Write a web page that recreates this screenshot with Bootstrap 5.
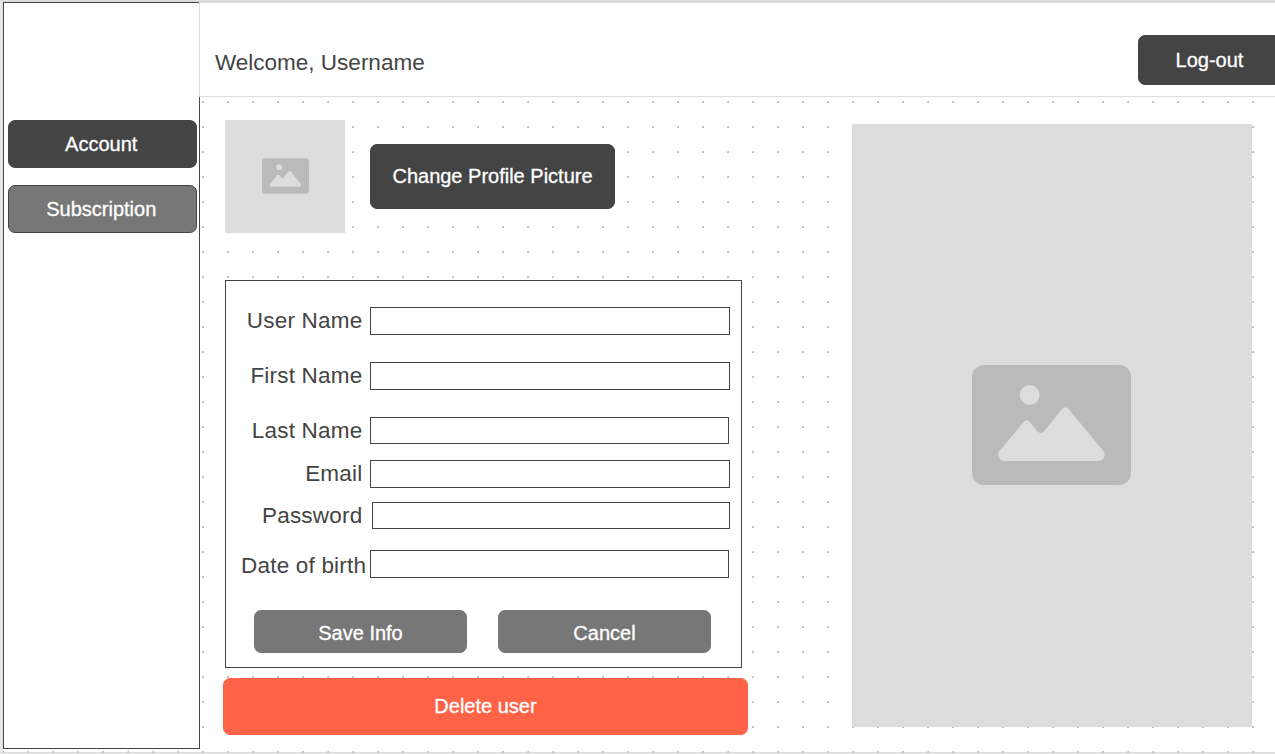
<!DOCTYPE html>
<html lang="en">
<head>
<meta charset="utf-8">
<meta name="viewport" content="width=device-width, initial-scale=1">
<title>Account</title>
<link href="https://cdn.jsdelivr.net/npm/bootstrap@5.3.0/dist/css/bootstrap.min.css" rel="stylesheet">
<style>
:root { --ink: #444; --mid: #777; --pale: #ddd; }
body { font-family: "Liberation Sans", Arial, sans-serif; color: var(--ink); background: #e8e8e8; height: 754px; font-size: 22.5px; line-height: 28px; }
.frame { height: 753px; border-top: 2px solid var(--pale); padding-left: 3px; background: linear-gradient(90deg, #ececec, #dedede 3px); }
.dotted { height: 751px; background: url("data:image/svg+xml,%3Csvg xmlns='http://www.w3.org/2000/svg' width='25' height='25' shape-rendering='crispEdges'%3E%3Crect width='2' height='2' fill='%23bbb'/%3E%3Crect width='1' height='1' fill='%23d8d8d8'/%3E%3C/svg%3E") 24px 24px, linear-gradient(var(--pale), var(--pale)) 0 100% / 100% 1px no-repeat, #fff; }
.side { width: 197px; height: 747px; border: 1px solid var(--ink); padding: 117px 2px 0 4px; gap: 17px; }
.content-col { margin-left: -1px; }
.topbar { height: 95px; border: 1px solid var(--pale); border-right: 0; padding-left: 15px; position: relative; }
.welcome { margin-top: 46px; }
.btn { --bs-btn-font-size: 20px; --bs-btn-line-height: 24px; --bs-btn-padding-x: 0; --bs-btn-padding-y: 0; --bs-btn-border-radius: 7px; --bs-btn-color: #fff; --bs-btn-hover-color: #fff; -webkit-text-stroke: .3px #fff; }
.btn-ink { --bs-btn-bg: var(--ink); --bs-btn-border-color: var(--ink); --bs-btn-hover-bg: #333; }
.btn-mid { --bs-btn-bg: var(--mid); --bs-btn-border-color: var(--mid); --bs-btn-hover-bg: #666; }
.btn-tomato { --bs-btn-bg: #ff6347; --bs-btn-border-color: #ff6347; --bs-btn-hover-bg: #e5533a; width: 525px; height: 57px; margin: 10px 0 0 -2px; padding-bottom: 2px; }
.side .btn { height: 48px; padding-right: 2.5px; }
.side .btn-mid { --bs-btn-border-color: var(--ink); }
.logout { width: 143px; height: 50px; margin: 32px -6px 0 0; }
.panels { padding: 23px 23px 0 26px; }
.left-col { width: 517px; }
.avatar { width: 120px; height: 113px; padding-bottom: 2px; }
.hero { width: 400px; height: 603px; margin-top: 4px; padding: 0 2px 2px 0; }
.placeholder-box { background: var(--pale); }
.change { width: 245px; height: 65px; margin: 24px 0 0 25px; padding-bottom: 2px; }
.info { height: 388px; margin-top: 47px; border: 1px solid var(--ink); padding: 26px 11px 0 0; }
.field { height: 28px; }
.field label { width: 136.4px; margin-right: 7.6px; letter-spacing: .2px; text-align: right; white-space: nowrap; }
.field .form-control { width: 360px; height: 28px; padding: 0 6px; border: 1px solid var(--ink); border-radius: 0; }
.field .w-359 { width: 359px; }
.field .h-27 { height: 27px; }
.gap-a { margin-bottom: 27px; }
.gap-b { margin-bottom: 15px; }
.gap-c { margin-bottom: 14px; }
.gap-d { margin-bottom: 20px; }
.field.password .form-control { width: 358px; margin-left: 2px; }
.field.birth label { width: 140.2px; margin-right: 3.8px; padding-top: 2px; }
.actions { margin: 32px 0 0 28px; gap: 31px; }
.actions .btn { width: 213px; height: 43px; padding-top: 3px; }
</style>
</head>
<body class="overflow-hidden">
<svg class="d-none" aria-hidden="true">
  <symbol id="picture" viewBox="0 0 159 120">
    <rect width="159" height="120" rx="12" fill="#bababa"/>
    <circle cx="57.7" cy="30" r="9.9" fill="#ddd"/>
    <path fill="#ddd" d="M32.5 96A6.3 6.3 0 0 1 27.4 86L51.8 56.8Q54.7 53.5 57.6 56.8L65.4 66.2Q68.7 69.6 72 66.2L90 44Q93.3 40.3 96.6 44L131.4 86A6.3 6.3 0 0 1 126.5 96Z"/>
  </symbol>
</svg>
<div class="frame">
  <div class="dotted d-flex">
    <nav class="side bg-white d-flex flex-column flex-shrink-0">
      <button class="btn btn-ink">Account</button>
      <button class="btn btn-mid">Subscription</button>
    </nav>
    <div class="content-col flex-grow-1">
      <header class="topbar bg-white d-flex justify-content-between align-items-start">
        <div class="welcome">Welcome, Username</div>
        <button class="btn btn-ink logout">Log-out</button>
      </header>
      <main class="panels d-flex justify-content-between align-items-start">
        <div class="left-col">
          <div class="d-flex align-items-start">
            <div class="avatar placeholder-box d-flex align-items-center justify-content-center">
              <svg width="47" height="36"><use href="#picture"/></svg>
            </div>
            <button class="btn btn-ink change">Change Profile Picture</button>
          </div>
          <form class="info bg-white">
            <div class="field d-flex gap-a"><label for="user">User Name</label><input id="user" class="form-control"></div>
            <div class="field d-flex gap-a"><label for="first">First Name</label><input id="first" class="form-control"></div>
            <div class="field d-flex gap-b"><label for="last">Last Name</label><input id="last" class="form-control w-359 h-27"></div>
            <div class="field d-flex gap-c"><label for="email">Email</label><input id="email" class="form-control"></div>
            <div class="field password d-flex gap-d"><label for="pass">Password</label><input id="pass" type="password" class="form-control h-27"></div>
            <div class="field birth d-flex"><label for="birth">Date of birth</label><input id="birth" class="form-control w-359"></div>
            <div class="actions d-flex">
              <button type="button" class="btn btn-mid">Save Info</button>
              <button type="button" class="btn btn-mid">Cancel</button>
            </div>
          </form>
          <button class="btn btn-tomato">Delete user</button>
        </div>
        <div class="hero placeholder-box d-flex align-items-center justify-content-center">
          <svg width="159" height="120"><use href="#picture"/></svg>
        </div>
      </main>
    </div>
  </div>
</div>
<script src="https://cdn.jsdelivr.net/npm/bootstrap@5.3.0/dist/js/bootstrap.bundle.min.js"></script>
</body>
</html>
